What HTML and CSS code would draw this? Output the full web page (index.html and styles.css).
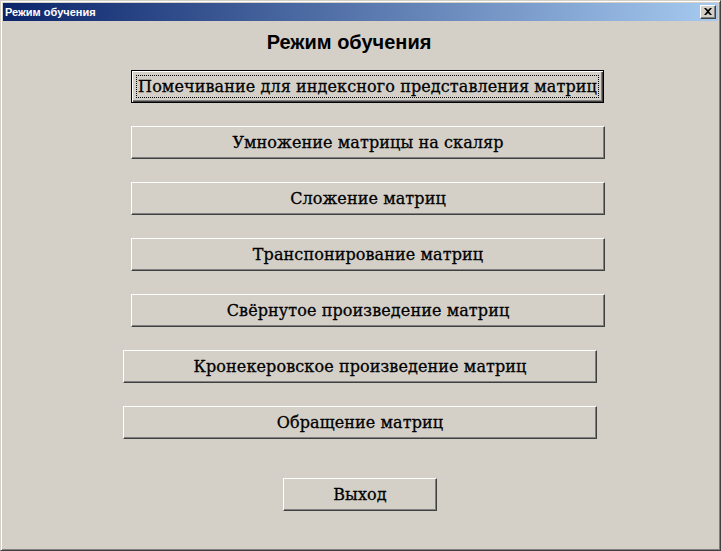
FILE: index.html
```html
<!DOCTYPE html>
<html lang="ru">
<head>
<meta charset="utf-8">
<title>Режим обучения</title>
<link rel="stylesheet" href="styles.css">
</head>
<body>
<div class="window">
  <div class="titlebar">
    <span class="title">Режим обучения</span>
    <span class="close">
      <svg width="8" height="7" viewBox="0 0 8 7"><path d="M0 0h2l2 2 2-2h2L5 3.5 8 7H6L4 5 2 7H0l3-3.5z" fill="#000"/></svg>
    </span>
  </div>
  <div class="client">
    <h1 class="heading">Режим обучения</h1>
    <div class="buttons">
      <button class="btn btn-wide btn-default"><span class="focus">Помечивание для индексного представления матриц</span></button>
      <button class="btn btn-wide">Умножение матрицы на скаляр</button>
      <button class="btn btn-wide">Сложение матриц</button>
      <button class="btn btn-wide">Транспонирование матриц</button>
      <button class="btn btn-wide">Свёрнутое произведение матриц</button>
      <button class="btn btn-wide btn-shift">Кронекеровское произведение матриц</button>
      <button class="btn btn-wide btn-shift">Обращение матриц</button>
      <button class="btn btn-exit">Выход</button>
    </div>
  </div>
</div>
</body>
</html>
```
FILE: styles.css
```css
* { box-sizing: border-box; }
html, body { margin: 0; padding: 0; }
body { width: 721px; height: 551px; overflow: hidden; background: #d4d0c8; }

.window {
  width: 721px;
  height: 551px;
  background: #d4d0c8;
  border: 1px solid;
  border-color: #d4d0c8 #404040 #404040 #d4d0c8;
  box-shadow: inset 1px 1px #ffffff, inset -1px -1px #808080;
  padding: 1px;
  display: flex;
  flex-direction: column;
}
.window > .titlebar { margin: 1px 1px 0 1px; }

.titlebar {
  height: 18px;
  background: linear-gradient(to right, #0a246a, #a6caf0);
  display: flex;
  align-items: center;
  justify-content: space-between;
  padding: 0 2px 0 2px;
}
.title {
  color: #fff;
  font-family: "Liberation Sans", Arial, sans-serif;
  font-weight: bold;
  font-size: 11px;
}
.close {
  width: 16px;
  height: 14px;
  background: #d4d0c8;
  border: 1px solid;
  border-color: #fff #404040 #404040 #fff;
  box-shadow: inset -1px -1px #808080;
  display: flex;
  align-items: center;
  justify-content: center;
  padding-bottom: 1px;
}

.client {
  flex: 1;
  display: flex;
  flex-direction: column;
}
.heading {
  margin: 9px 0 0 261px;
  width: 172px;
  text-align: center;
  font-family: "Liberation Sans", Arial, sans-serif;
  font-weight: bold;
  font-size: 20px;
  line-height: 24px;
  color: #000;
}
.buttons {
  display: flex;
  flex-direction: column;
  align-items: flex-start;
  margin-top: 16px;
}
.btn {
  height: 33px;
  background: #d4d0c8;
  border: 1px solid;
  border-color: #fff #404040 #404040 #fff;
  box-shadow: inset -1px -1px #808080;
  font-family: "DejaVu Serif", "Liberation Serif", serif;
  font-size: 16px;
  letter-spacing: 0.1px;
  -webkit-text-stroke: 0.3px #000;
  white-space: nowrap;
  color: #000;
  padding: 0;
  margin-bottom: 23px;
  display: flex;
  align-items: center;
  justify-content: center;
}
.btn-wide { width: 474px; margin-left: 129px; }
.btn-shift { margin-left: 121px; }
.btn-default {
  width: 473px;
  border: 1px solid #000;
  box-shadow: inset 1px 1px #fff, inset -1px -1px #404040, inset -2px -2px #808080;
  padding: 4px;
}
.focus {
  display: flex;
  align-items: center;
  justify-content: center;
  width: 100%;
  height: 100%;
  border: 1px dotted #000;
  white-space: nowrap;
}
.btn-exit {
  width: 154px;
  margin-left: 281px;
  margin-top: 16px;
}
```
